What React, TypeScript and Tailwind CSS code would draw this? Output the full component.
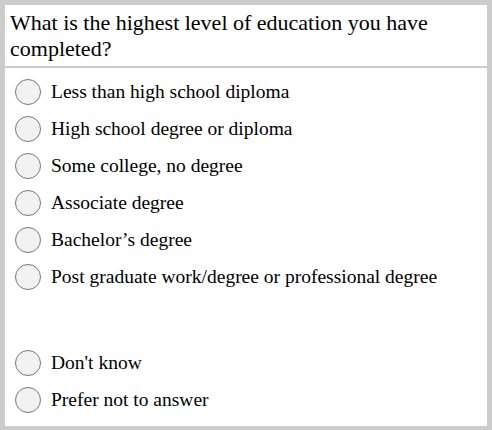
import React from "react";

const options = [
  "Less than high school diploma",
  "High school degree or diploma",
  "Some college, no degree",
  "Associate degree",
  "Bachelor’s degree",
  "Post graduate work/degree or professional degree",
];
const extra = ["Don't know", "Prefer not to answer"];

function Row({ label }: { label: string }) {
  return (
    <div className="flex items-center h-[37px]">
      <span className="ml-[10px] w-[26px] h-[26px] rounded-full border border-[#777] bg-[#f2f2f2] shrink-0" />
      <span className="ml-[10px] text-[19.5px] text-black leading-none">{label}</span>
    </div>
  );
}

export default function App() {
  return (
    <div className="w-[492px] h-[430px] bg-[#cccccc] pt-[5px] pl-[5px] pr-[5px] pb-[4px]" style={{ fontFamily: '"Liberation Serif", serif' }}>
      <div className="bg-white h-full">
        <div className="px-[5px] pt-[5px] h-[61px] text-[22px] leading-[26px] text-black">
          What is the highest level of education you have completed?
        </div>
        <div className="h-[2px] bg-[#cccccc]" />
        <div className="pt-[5px]">
          {options.map((o) => (
            <Row key={o} label={o} />
          ))}
          <div className="h-[49px]" />
          {extra.map((o) => (
            <Row key={o} label={o} />
          ))}
        </div>
      </div>
    </div>
  );
}
